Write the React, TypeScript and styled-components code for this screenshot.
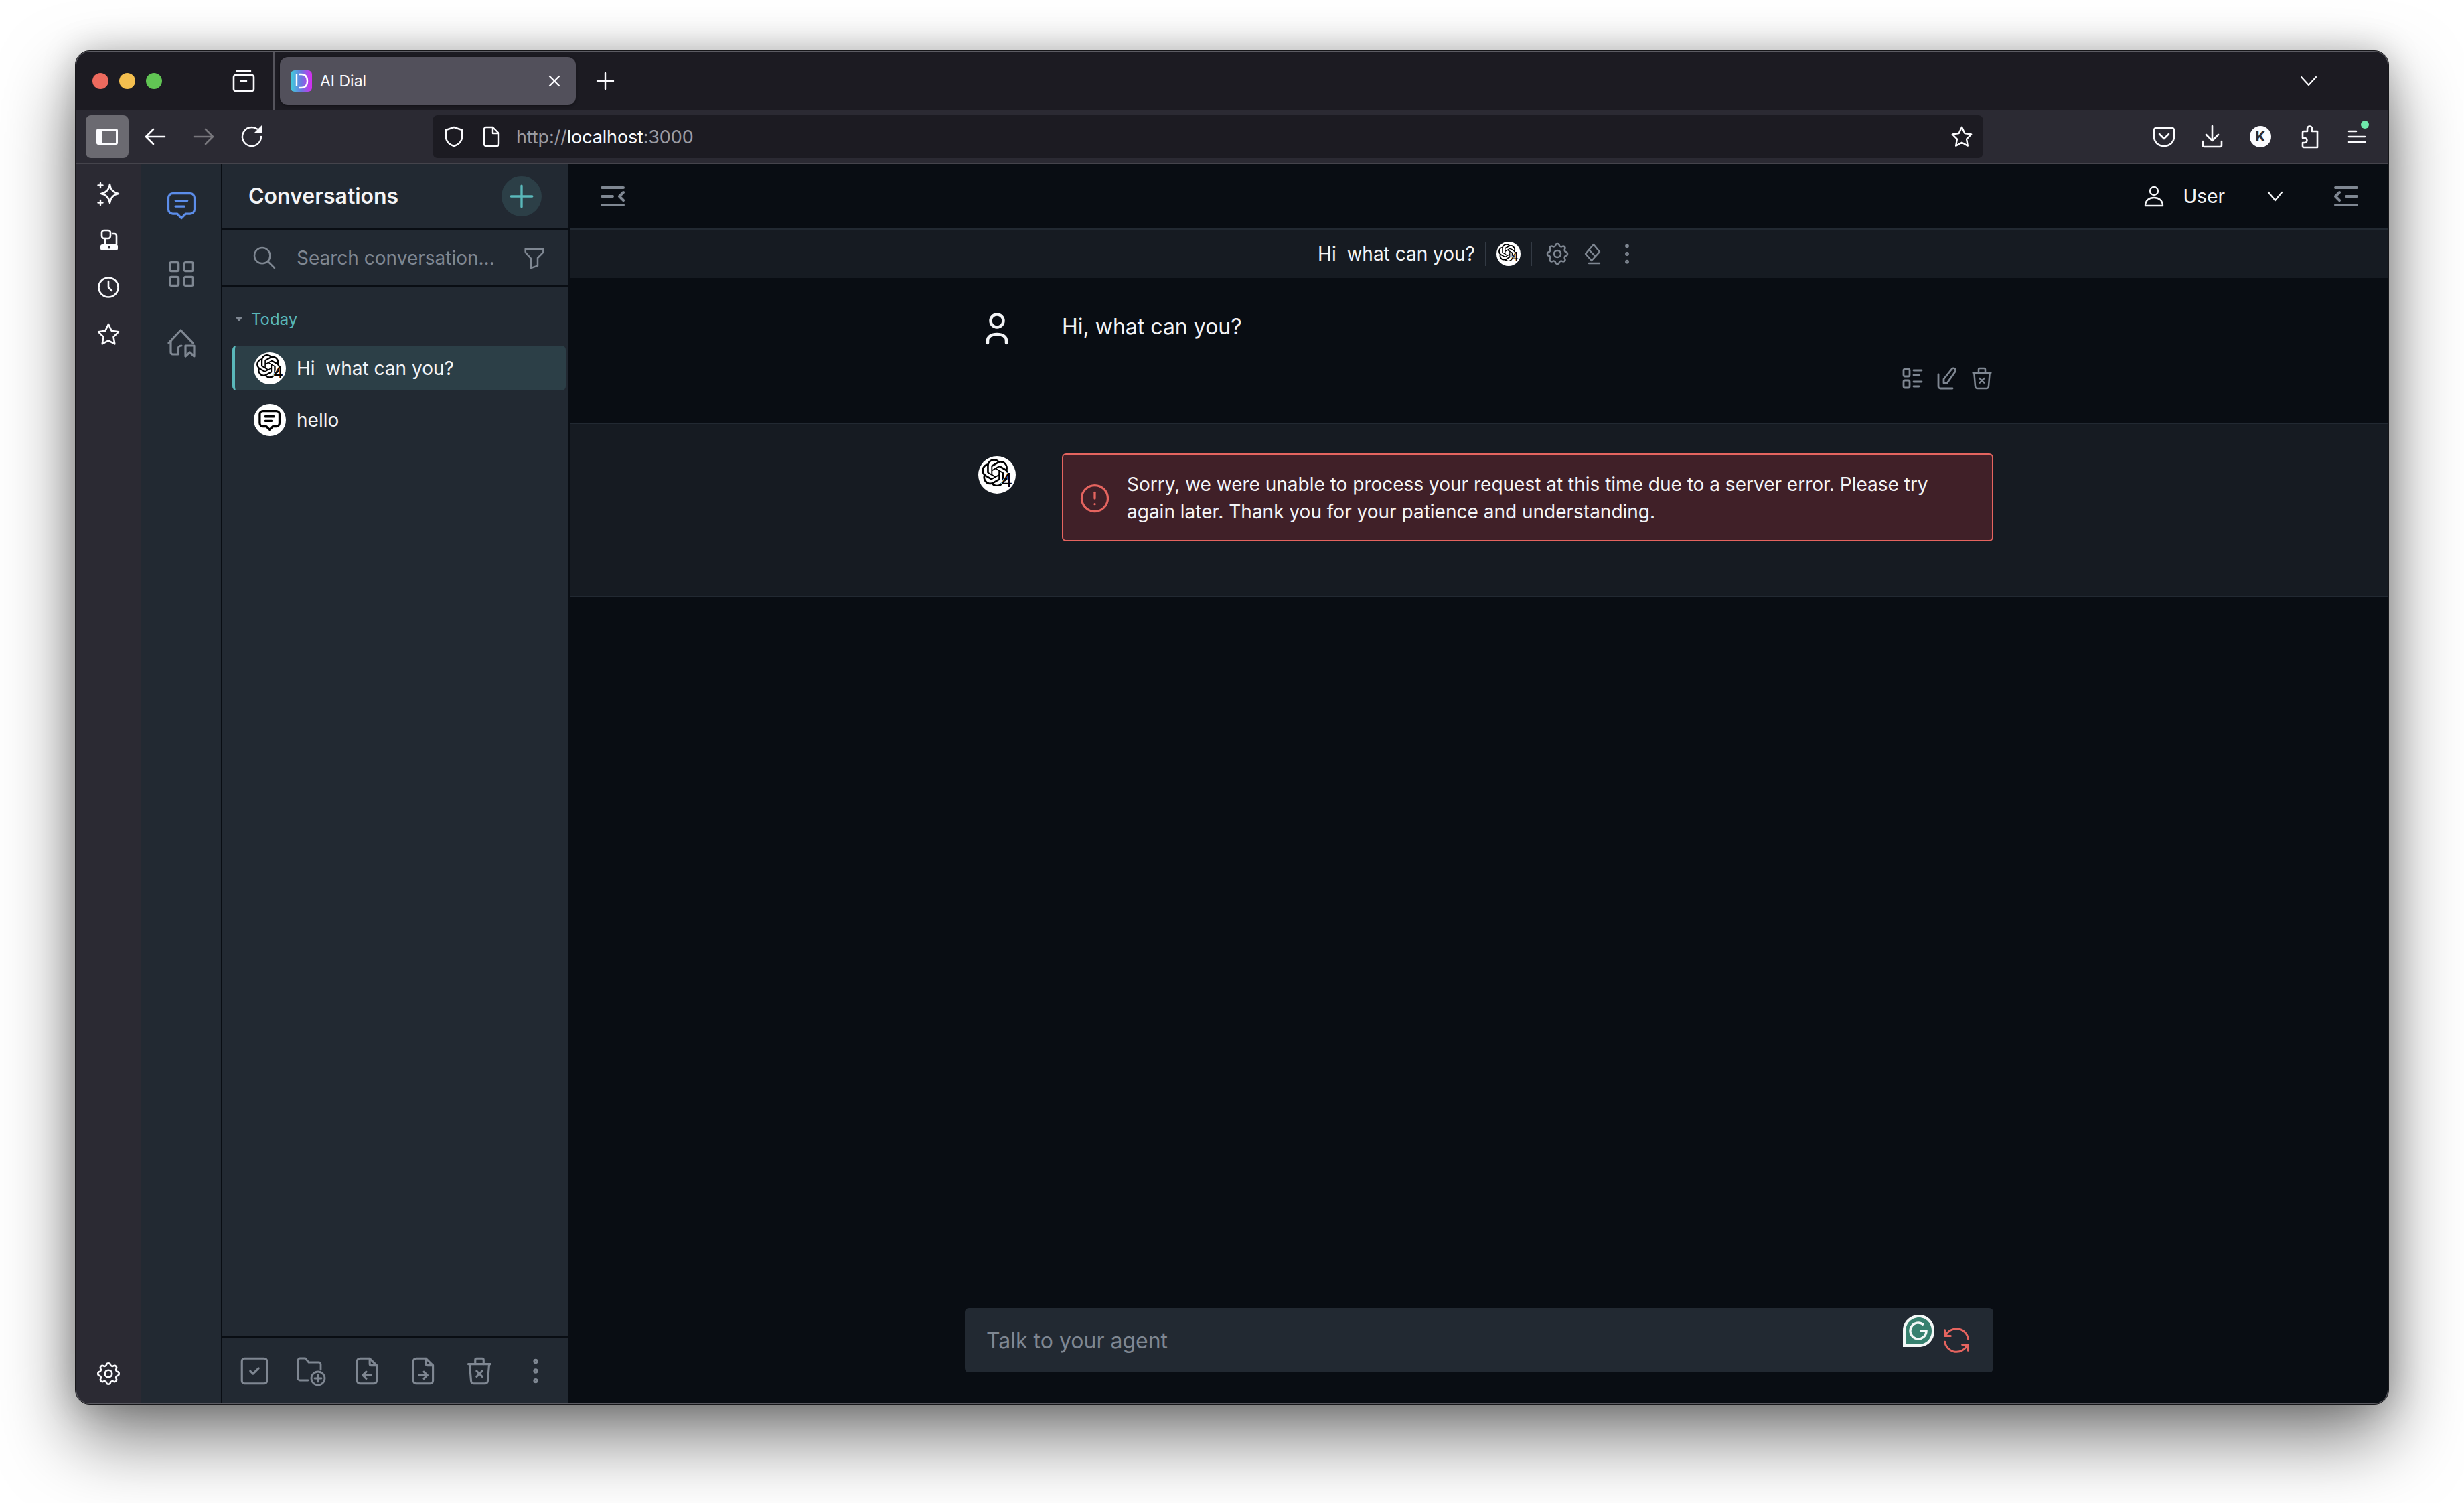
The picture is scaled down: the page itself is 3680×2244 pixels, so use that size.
import React from 'react'
import styled, { createGlobalStyle } from 'styled-components'
import { SiOpenai } from 'react-icons/si'
import {
  TbAlertCircle,
  TbDotsVertical,
  TbFileArrowLeft,
  TbFileArrowRight,
  TbFilter,
  TbLayoutGrid,
  TbMessage2,
  TbPlus,
  TbRefresh,
  TbSearch,
  TbSettings,
  TbSquareCheck,
  TbTrashX,
  TbX,
} from 'react-icons/tb'

const GlobalStyle = createGlobalStyle`
  html, body { margin: 0; padding: 0; background: #fff; }
  body { font-family: Inter, "Liberation Sans", sans-serif; -webkit-font-smoothing: antialiased; }
  * { box-sizing: border-box; }
`

const Page = styled.div`
  width: 3680px;
  height: 2244px;
  padding: 75px 112px 147px;
  background: #fff;
  overflow: hidden;
`

const Window = styled.div`
  width: 100%;
  height: 100%;
  padding: 1px;
  border: 1px solid #17171a;
  border-radius: 22px;
  background: #5c5c63;
  box-shadow: 0 50px 110px rgba(0, 0, 0, 0.52), 0 0 50px rgba(0, 0, 0, 0.22);
`

const WindowInner = styled.div`
  display: flex;
  flex-direction: column;
  height: 100%;
  border-radius: 20px;
  overflow: hidden;
  color: #fbfbfe;
`

const Icon = styled.span<{ $size: number; $height?: number; $color?: string }>`
  position: relative;
  display: block;
  flex-shrink: 0;
  width: ${(p) => p.$size}px;
  height: ${(p) => p.$height ?? p.$size}px;
  color: ${(p) => p.$color ?? 'inherit'};
  svg { display: block; width: 100%; height: 100%; }
`

// tabler glyphs get drawn large here, so thin the stroke back down
const TablerIcon = styled(Icon)`
  svg { stroke-width: 1.5; }
`

/* browser chrome */
const TitleBar = styled.div`
  display: flex;
  align-items: center;
  height: 87px;
  flex-shrink: 0;
  padding: 0 105px 0 24px;
  background: #1c1b22;
`

const Lights = styled.div`
  display: flex;
  gap: 16px;
  margin-right: 104px;
`

const Light = styled.span<{ $color: string }>`
  width: 24px;
  height: 24px;
  border-radius: 50%;
  background: ${(p) => p.$color};
`

const TabDivider = styled.span`
  align-self: stretch;
  width: 2px;
  margin: 0 8px 0 26px;
  background: #55545c;
`

const Tab = styled.div`
  display: flex;
  align-items: center;
  width: 442px;
  height: 72px;
  padding: 0 18px 0 16px;
  border-radius: 12px;
  background: #52505b;
  box-shadow: 0 1px 4px rgba(0, 0, 0, 0.4);
  margin-right: 30px;
`

const TabLabel = styled.span`
  flex: 1;
  margin-left: 12px;
  font-size: 23px;
`

const Spring = styled.span`
  flex: 1;
`

const NavBar = styled.div`
  display: flex;
  align-items: center;
  height: 81px;
  flex-shrink: 0;
  padding-left: 14px;
  background: #2b2a33;
  border-bottom: 1px solid #45444c;
`

const SidebarToggle = styled.div`
  display: flex;
  align-items: center;
  justify-content: center;
  width: 64px;
  height: 64px;
  margin-right: 22px;
  border-radius: 8px;
  background: #6b6a71;
`

const NavButtons = styled.div`
  display: flex;
  gap: 36px;
  margin-right: 252px;
`

const UrlBar = styled.div`
  display: flex;
  align-items: center;
  width: 2316px;
  height: 64px;
  padding: 0 15px 0 16px;
  border-radius: 8px;
  background: #1c1b22;
`

const UrlIcons = styled.div`
  display: flex;
  gap: 24px;
  margin-right: 21px;
`

const UrlText = styled.span`
  flex: 1;
  font-size: 27px;
  letter-spacing: -0.15px;
  color: #9b9ba2;
  b { font-weight: 400; color: #fbfbfe; }
`

const Tools = styled.div`
  display: flex;
  align-items: center;
  gap: 36px;
  margin-left: 252px;
`

const AccountBadge = styled.span`
  display: flex;
  align-items: center;
  justify-content: center;
  width: 32px;
  height: 32px;
  margin: 2px;
  border-radius: 50%;
  background: #fbfbfe;
  color: #2b2a33;
  font-size: 20px;
  font-weight: 800;
`

const UpdateDot = styled.span`
  position: absolute;
  top: -6px;
  right: 0;
  width: 12px;
  height: 12px;
  border-radius: 50%;
  background: #6fe8ab;
`

/* page body */
const Body = styled.div`
  display: flex;
  flex: 1;
  min-height: 0;
`

const BrowserSidebar = styled.div`
  display: flex;
  flex-direction: column;
  align-items: center;
  gap: 34px;
  width: 96px;
  flex-shrink: 0;
  padding: 26px 0 23px;
  background: #2b2a33;
`

const SidebarBottom = styled.div`
  margin-top: auto;
`

const Rail = styled.nav`
  display: flex;
  flex-direction: column;
  align-items: center;
  gap: 51px;
  width: 122px;
  flex-shrink: 0;
  padding-top: 35px;
  background: #222932;
  border-left: 1px solid #3a3f47;
  border-right: 2px solid #090d13;
  color: #7f8792;
`

const Panel = styled.aside`
  display: flex;
  flex-direction: column;
  width: 520px;
  flex-shrink: 0;
  background: #222932;
  border-right: 3px solid #090d13;
`

const PanelHeader = styled.div`
  display: flex;
  align-items: center;
  justify-content: space-between;
  height: 98px;
  padding: 0 40px 0 39px;
  flex-shrink: 0;
  border-bottom: 3px solid #090d13;
`

const PanelTitle = styled.h1`
  margin: 0;
  font-size: 32px;
  font-weight: 600;
  color: #f3f4f6;
`

const AddButton = styled.span`
  display: flex;
  align-items: center;
  justify-content: center;
  width: 60px;
  height: 60px;
  border-radius: 50%;
  background: #2c3f47;
`

const SearchRow = styled.div`
  display: flex;
  align-items: center;
  height: 85px;
  flex-shrink: 0;
  padding: 2px 31px 0 43px;
  gap: 28px;
  border-bottom: 3px solid #090d13;
  color: #7f8792;
`

const SearchHint = styled.span`
  flex: 1;
  font-size: 28px;
`

const List = styled.div`
  display: flex;
  flex-direction: column;
  flex: 1;
  padding: 34px 4px 0 15px;
`

const Section = styled.div`
  display: flex;
  align-items: center;
  height: 29px;
  margin-bottom: 25px;
  font-size: 24px;
  color: #5ab8ba;
`

const Caret = styled.span`
  width: 0;
  height: 0;
  margin-right: 12px;
  margin-left: 4px;
  border-left: 6px solid transparent;
  border-right: 6px solid transparent;
  border-top: 7px solid #7f8792;
`

const ConversationRow = styled.div<{ $active?: boolean }>`
  display: flex;
  align-items: center;
  gap: 16px;
  height: 67px;
  margin-bottom: 10px;
  padding-left: ${(p) => (p.$active ? 28 : 32)}px;
  border-radius: 6px;
  border-left: ${(p) => (p.$active ? '4px solid #5ab8ba' : 'none')};
  background: ${(p) => (p.$active ? '#2c3f47' : 'transparent')};
  font-size: 28px;
  color: #f3f4f6;
  white-space: pre;
`

const Badge = styled.span<{ $size: number }>`
  position: relative;
  display: flex;
  align-items: center;
  justify-content: center;
  flex-shrink: 0;
  width: ${(p) => p.$size}px;
  height: ${(p) => p.$size}px;
  border-radius: 50%;
  background: #fff;
  color: #000;
  svg { width: 82%; height: 82%; }
`

const GptBadge = styled(Badge)`
  justify-content: flex-start;
  align-items: flex-start;
  svg {
    width: 74%;
    height: 74%;
    margin: 7% 0 0 9%;
  }
`

const BadgeDigit = styled.span<{ $size: number }>`
  position: absolute;
  right: 8%;
  bottom: 10%;
  font-size: ${(p) => Math.round(p.$size * 0.5)}px;
  line-height: 1;
  color: #000;
  text-shadow: -1px 0 0 #fff, 0 -1px 0 #fff;
`

const PanelFooter = styled.div`
  display: flex;
  align-items: center;
  gap: 34px;
  height: 100px;
  flex-shrink: 0;
  padding-left: 23px;
  border-top: 3px solid #090d13;
  color: #7f8792;
`

/* chat area */
const Main = styled.main`
  display: flex;
  flex-direction: column;
  flex: 1;
  min-width: 0;
  background: #090d13;
`

const TopBar = styled.header`
  display: flex;
  align-items: center;
  height: 98px;
  flex-shrink: 0;
  padding: 0 44px 0 45px;
  border-bottom: 2px solid #222932;
`

const UserMenu = styled.div`
  display: flex;
  align-items: center;
  margin-left: auto;
  margin-right: 74px;
  font-size: 28px;
  color: #f3f4f6;
`

const UserName = styled.span`
  margin: 0 61px 0 28px;
`

const ConversationBar = styled.div`
  display: flex;
  align-items: center;
  justify-content: center;
  height: 72px;
  flex-shrink: 0;
  background: #161b22;
  font-size: 28px;
  color: #f3f4f6;
  white-space: pre;
`

const BarDivider = styled.span`
  width: 2px;
  height: 36px;
  margin: 0 15px;
  background: #333a44;
`

const BarTools = styled.div`
  display: flex;
  align-items: center;
  gap: 16px;
  margin-left: 3px;
  color: #7f8792;
`

const Message = styled.section<{ $assistant?: boolean }>`
  flex-shrink: 0;
  padding: ${(p) => (p.$assistant ? '44px 0 82px' : '49px 0 48px')};
  background: ${(p) => (p.$assistant ? '#161b22' : 'transparent')};
  border-bottom: 2px solid #222932;
`

const MessageInner = styled.div`
  display: flex;
  width: 1536px;
  margin: 0 auto;
`

const AvatarCol = styled.div<{ $top: number }>`
  display: flex;
  justify-content: center;
  width: 96px;
  margin-right: 49px;
  padding-top: ${(p) => p.$top}px;
  flex-shrink: 0;
`

const MessageBody = styled.div`
  flex: 1;
  min-width: 0;
`

const MessageText = styled.p`
  margin: 0;
  font-size: 32px;
  line-height: 48px;
  color: #f3f4f6;
`

const MessageActions = styled.div`
  display: flex;
  align-items: center;
  justify-content: flex-end;
  gap: 15px;
  height: 36px;
  margin: 35px -3px 0 0;
  color: #7f8792;
`

const ErrorBox = styled.div`
  display: flex;
  align-items: center;
  gap: 22px;
  height: 131px;
  padding: 2px 29px 0 21px;
  border: 2px solid #e5645f;
  border-radius: 6px;
  background: #402028;
  font-size: 28px;
  line-height: 41px;
  color: #f3f4f6;
`

const Composer = styled.div`
  position: relative;
  display: flex;
  align-items: center;
  width: 1536px;
  height: 96px;
  margin: auto auto 46px;
  padding-left: 32px;
  border-radius: 6px;
  background: #222932;
  font-size: 32px;
  color: #7f8792;
`

const GrammarlyMark = styled.span`
  position: absolute;
  top: 10px;
  right: 88px;
  width: 47px;
  height: 48px;
  svg { display: block; width: 100%; height: 100%; }
`

const GrammarlyRetry = styled.span`
  position: absolute;
  top: 22px;
  right: 29px;
  width: 52px;
  height: 52px;
  color: #e5645f;
  svg { display: block; width: 100%; height: 100%; stroke-width: 1.4; }
`

const Line = ({ children, viewBox = '0 0 36 36', width = 2.6 }: { children: React.ReactNode; viewBox?: string; width?: number }) => (
  <svg viewBox={viewBox} fill="none" stroke="currentColor" strokeWidth={width} strokeLinecap="round" strokeLinejoin="round">
    {children}
  </svg>
)

const StarShape = () => (
  <Line>
    <path d="M18 3 22.6 12.8 33 14.3 25.5 21.8 27.3 32.4 18 27.3 8.7 32.4 10.5 21.8 3 14.3 13.4 12.8Z" />
  </Line>
)

const Gpt4 = ({ size }: { size: number }) => (
  <GptBadge $size={size}>
    <SiOpenai />
    <BadgeDigit $size={size}>4</BadgeDigit>
  </GptBadge>
)

export default function App() {
  return (
    <Page>
      <GlobalStyle />
      <Window>
        <WindowInner>
          <TitleBar>
            <Lights>
              <Light $color="#ed6a5e" />
              <Light $color="#f4bf4f" />
              <Light $color="#61c554" />
            </Lights>
            <Icon $size={36}>
              <Line>
                <rect x="3" y="9" width="30" height="24" rx="3" />
                <path d="M8 3H28M14 18H22" />
              </Line>
            </Icon>
            <TabDivider />
            <Tab>
              <Icon $size={32}>
                <svg viewBox="0 0 32 32">
                  <defs>
                    <linearGradient id="dial" x1="0" x2="1" y1="0" y2="0">
                      <stop offset="0" stopColor="#3fd0dc" />
                      <stop offset="0.5" stopColor="#6a78e0" />
                      <stop offset="1" stopColor="#d62cf0" />
                    </linearGradient>
                  </defs>
                  <rect width="32" height="32" rx="6" fill="url(#dial)" />
                  <path d="M9 6V24M12 6H16C22 6 25 10 25 16S22 26 16 26H12" fill="none" stroke="#fff" strokeWidth="2.4" />
                </svg>
              </Icon>
              <TabLabel>AI Dial</TabLabel>
              <Icon $size={28}>
                <TbX />
              </Icon>
            </Tab>
            <Icon $size={28}>
              <Line viewBox="0 0 28 28" width={2.4}>
                <path d="M14 2V26M2 14H26" />
              </Line>
            </Icon>
            <Spring />
            <Icon $size={26}>
              <Line viewBox="0 0 26 26" width={2.2}>
                <path d="M2 7 13 19 24 7" />
              </Line>
            </Icon>
          </TitleBar>

          <NavBar>
            <SidebarToggle>
              <Icon $size={32} $height={24}>
                <svg viewBox="0 0 32 24">
                  <rect width="32" height="24" rx="3" fill="#fbfbfe" />
                  <rect x="8" y="3" width="21" height="18" fill="#6b6a71" />
                </svg>
              </Icon>
            </SidebarToggle>
            <NavButtons>
              <Icon $size={36}>
                <Line>
                  <path d="M32 18H5M15 7 4 18 15 29" />
                </Line>
              </Icon>
              <Icon $size={36} $color="#77767c">
                <Line>
                  <path d="M4 18H31M21 7 32 18 21 29" />
                </Line>
              </Icon>
              <Icon $size={36}>
                <svg viewBox="0 0 36 36" fill="none" stroke="currentColor" strokeWidth="2.4">
                  <path d="M32 18A14 14 0 1 1 26 6.5" strokeLinecap="round" />
                  <path d="M22 12H33V1Z" fill="currentColor" stroke="none" />
                </svg>
              </Icon>
            </NavButtons>
            <UrlBar>
              <UrlIcons>
                <Icon $size={32}>
                  <Line viewBox="0 0 32 32" width={2.4}>
                    <path d="M16 2 28 6V16C28 24 22 28 16 30 10 28 4 24 4 16V6Z" />
                  </Line>
                </Icon>
                <Icon $size={32}>
                  <Line viewBox="0 0 32 32" width={2.4}>
                    <path d="M8 2H18L27 11V27A3 3 0 0 1 24 30H8A3 3 0 0 1 5 27V5A3 3 0 0 1 8 2ZM18 2V11H27" />
                  </Line>
                </Icon>
              </UrlIcons>
              <UrlText>
                http://<b>localhost</b>:3000
              </UrlText>
              <Icon $size={34}>
                <StarShape />
              </Icon>
            </UrlBar>
            <Tools>
              <Icon $size={36}>
                <Line>
                  <path d="M6 5H30A3 3 0 0 1 33 8V17C33 27 26 32 18 32 10 32 3 27 3 17V8A3 3 0 0 1 6 5Z" />
                  <path d="M11 14 18 21 25 14" />
                </Line>
              </Icon>
              <Icon $size={36}>
                <Line>
                  <path d="M18 2V24M9 15 18 24 27 15M4 25V31A2 2 0 0 0 6 33H30A2 2 0 0 0 32 31V25" />
                </Line>
              </Icon>
              <Icon $size={36}>
                <AccountBadge>K</AccountBadge>
              </Icon>
              <Icon $size={36}>
                <Line>
                  <path d="M13 10H16V6A3.5 3.5 0 0 1 23 6V10H31V34H11A2 2 0 0 1 9 32V27H12A3.5 3.5 0 0 0 12 20H9V12A2 2 0 0 1 11 10Z" />
                </Line>
              </Icon>
              <Icon $size={36}>
                <Line width={2.6}>
                  <path d="M6 10H17M6 18H30M6 26H30" />
                </Line>
                <UpdateDot />
              </Icon>
            </Tools>
          </NavBar>

          <Body>
            <BrowserSidebar>
              <Icon $size={36}>
                <Line width={2.4}>
                  <path d="M20 4C21 12 25 16.500 33 18 25 19.500 21 24 20 32 19 24 15 19.500 7 18 15 16.500 19 12 20 4Z" />
                  <path d="M6 2V9M2.500 5.500H9.500M6 28V35M2.500 31.500H9.500" />
                </Line>
              </Icon>
              <Icon $size={36}>
                <svg viewBox="0 0 36 36" fill="none" stroke="currentColor" strokeWidth="2.6" strokeLinecap="round">
                  <rect x="8" y="3" width="13" height="12" rx="3.500" />
                  <path d="M24 8H27A3 3 0 0 1 30 11V24M13 15V24" />
                  <rect x="6" y="24" width="26" height="9" rx="3" fill="currentColor" stroke="none" />
                  <circle cx="19" cy="28.500" r="2" fill="#2b2a33" stroke="none" />
                </svg>
              </Icon>
              <Icon $size={36}>
                <Line>
                  <circle cx="18" cy="18" r="14.500" />
                  <path d="M18 9V18L23 23" />
                </Line>
              </Icon>
              <Icon $size={36}>
                <StarShape />
              </Icon>
              <SidebarBottom>
                <TablerIcon $size={42}>
                  <TbSettings />
                </TablerIcon>
              </SidebarBottom>
            </BrowserSidebar>

            <Rail>
              <TablerIcon $size={52} $color="#5c8dea">
                <TbMessage2 />
              </TablerIcon>
              <TablerIcon $size={52}>
                <TbLayoutGrid />
              </TablerIcon>
              <Icon $size={52}>
                <Line viewBox="-4 -4 52 52" width={3.2}>
                  <path d="M3 22 21 3 39 22" />
                  <path d="M6 19V36A3 3 0 0 0 9 39H17V31A5 5 0 0 1 22 26" />
                  <path d="M28 26H41V42L34.500 36 28 42Z" />
                </Line>
              </Icon>
            </Rail>

            <Panel>
              <PanelHeader>
                <PanelTitle>Conversations</PanelTitle>
                <AddButton>
                  <TablerIcon $size={54} $color="#5ab8ba">
                    <TbPlus />
                  </TablerIcon>
                </AddButton>
              </PanelHeader>
              <SearchRow>
                <TablerIcon $size={40}>
                  <TbSearch />
                </TablerIcon>
                <SearchHint>Search conversation...</SearchHint>
                <TablerIcon $size={40}>
                  <TbFilter />
                </TablerIcon>
              </SearchRow>
              <List>
                <Section>
                  <Caret />
                  Today
                </Section>
                <ConversationRow $active>
                  <Gpt4 size={48} />
                  Hi  what can you?
                </ConversationRow>
                <ConversationRow>
                  <Badge $size={48}>
                    <TbMessage2 />
                  </Badge>
                  hello
                </ConversationRow>
              </List>
              <PanelFooter>
                <TablerIcon $size={50}>
                  <TbSquareCheck />
                </TablerIcon>
                <Icon $size={50}>
                  <Line viewBox="-3 -3 50 50" width={2.8}>
                    <path d="M18 36H6A3 3 0 0 1 3 33V6A3 3 0 0 1 6 3H14L19 9H34A3 3 0 0 1 37 12V20" />
                    <circle cx="33" cy="33" r="10" />
                    <path d="M33 28V38M28 33H38" />
                  </Line>
                </Icon>
                <TablerIcon $size={50}>
                  <TbFileArrowLeft />
                </TablerIcon>
                <TablerIcon $size={50}>
                  <TbFileArrowRight />
                </TablerIcon>
                <TablerIcon $size={50}>
                  <TbTrashX />
                </TablerIcon>
                <TablerIcon $size={50}>
                  <TbDotsVertical />
                </TablerIcon>
              </PanelFooter>
            </Panel>

            <Main>
              <TopBar>
                <Icon $size={36} $height={32} $color="#7f8792">
                  <Line viewBox="0 0 36 32" width={4}>
                    <path d="M2 3H34M2 16H18M2 29H34M34 10 28 16 34 22" />
                  </Line>
                </Icon>
                <UserMenu>
                  <Icon $size={32}>
                    <Line viewBox="0 0 32 32" width={2.4}>
                      <circle cx="16" cy="8" r="6" />
                      <path d="M3 30C3 22 9 18 16 18S29 22 29 30Z" />
                    </Line>
                  </Icon>
                  <UserName>User</UserName>
                  <Icon $size={28}>
                    <Line viewBox="0 0 28 28" width={2.4}>
                      <path d="M4 8 14 20 24 8" />
                    </Line>
                  </Icon>
                </UserMenu>
                <Icon $size={36} $height={32} $color="#7f8792">
                  <Line viewBox="0 0 36 32" width={4}>
                    <path d="M2 3H34M18 16H34M2 29H34M8 10 2 16 8 22" />
                  </Line>
                </Icon>
              </TopBar>

              <ConversationBar>
                Hi  what can you?
                <BarDivider />
                <Gpt4 size={36} />
                <BarDivider />
                <BarTools>
                  <TablerIcon $size={40}>
                    <TbSettings />
                  </TablerIcon>
                  <Icon $size={32}>
                    <Line viewBox="0 0 32 32" width={2.4}>
                      <path d="M18 2 27 13 15 26 6 16Z" />
                      <path d="M11 10 21 20M11 30H27" />
                    </Line>
                  </Icon>
                  <TablerIcon $size={40}>
                    <TbDotsVertical />
                  </TablerIcon>
                </BarTools>
              </ConversationBar>

              <Message>
                <MessageInner>
                  <AvatarCol $top={4}>
                    <Icon $size={34} $height={48} $color="#f3f4f6">
                      <Line viewBox="0 0 34 48" width={4.5}>
                        <circle cx="17" cy="11" r="9.500" />
                        <path d="M3 44V41C3 34 9 31 17 31S31 34 31 41V44" />
                      </Line>
                    </Icon>
                  </AvatarCol>
                  <MessageBody>
                    <MessageText>Hi, what can you?</MessageText>
                    <MessageActions>
                      <Icon $size={36}>
                        <Line width={2.8}>
                          <rect x="5" y="4" width="9" height="11" rx="2" />
                          <rect x="5" y="21" width="9" height="11" rx="2" />
                          <path d="M20 6H32M20 13H28M20 23H32M20 30H28" />
                        </Line>
                      </Icon>
                      <Icon $size={36}>
                        <Line width={2.8}>
                          <path d="M6 12V30A3 3 0 0 0 9 33H27" />
                          <path d="M14 25V19L26 4A3.200 3.200 0 0 1 31 8L19 25Z" />
                        </Line>
                      </Icon>
                      <TablerIcon $size={40}>
                        <TbTrashX />
                      </TablerIcon>
                    </MessageActions>
                  </MessageBody>
                </MessageInner>
              </Message>

              <Message $assistant>
                <MessageInner>
                  <AvatarCol $top={4}>
                    <Gpt4 size={56} />
                  </AvatarCol>
                  <MessageBody>
                    <ErrorBox>
                      <TablerIcon $size={52} $color="#e5645f">
                        <TbAlertCircle />
                      </TablerIcon>
                      <span>
                        Sorry, we were unable to process your request at this time due to a server error. Please try again later. Thank you for your patience and understanding.
                      </span>
                    </ErrorBox>
                  </MessageBody>
                </MessageInner>
              </Message>

              <Composer>
                Talk to your agent
                <GrammarlyMark>
                  <svg viewBox="0 0 47 48">
                    <path d="M24 0C37 0 47 10 47 24S37 48 24 48H0V23C0 10 11 0 24 0Z" fill="#f4f8f7" />
                    <path d="M24 4C35 4 43 13 43 24S35 44 24 44H4V24C4 13 13 4 24 4Z" fill="#37816f" />
                    <path d="M31 15A12 12 0 1 0 35 24H25" fill="none" stroke="#f4f8f7" strokeWidth="3.500" />
                  </svg>
                </GrammarlyMark>
                <GrammarlyRetry>
                  <TbRefresh />
                </GrammarlyRetry>
              </Composer>
            </Main>
          </Body>
        </WindowInner>
      </Window>
    </Page>
  )
}
